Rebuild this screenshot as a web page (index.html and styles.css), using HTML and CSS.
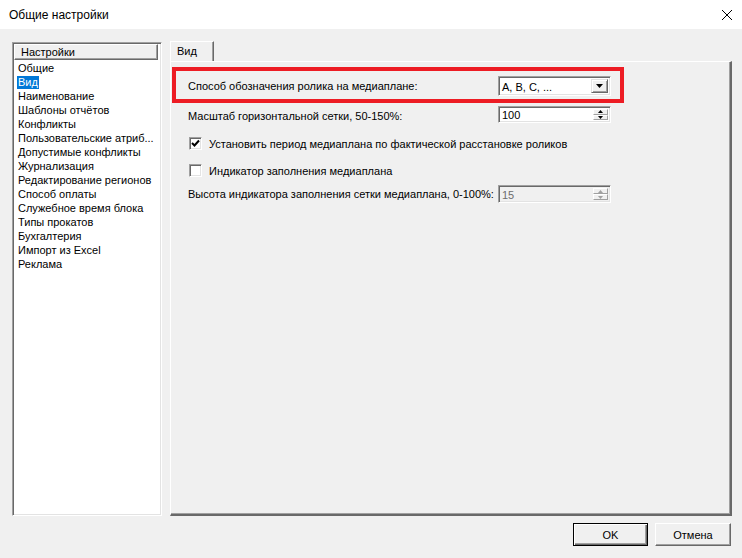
FILE: index.html
```html
<!DOCTYPE html>
<html lang="ru">
<head>
<meta charset="utf-8">
<title>Общие настройки</title>
<link rel="stylesheet" href="styles.css">
</head>
<body>
<div class="window">
  <div class="titlebar">
    <span class="title">Общие настройки</span>
    <svg class="close" width="12" height="12" viewBox="0 0 12 12"><path d="M1 1 L11 11 M11 1 L1 11" stroke="#000" stroke-width="1" fill="none"/></svg>
  </div>
  <div class="main">
    <div class="listbox">
      <div class="lb-header">Настройки</div>
      <ul class="lb-items">
        <li>Общие</li>
        <li><span class="sel">Вид</span></li>
        <li>Наименование</li>
        <li>Шаблоны отчётов</li>
        <li>Конфликты</li>
        <li>Пользовательские атриб...</li>
        <li>Допустимые конфликты</li>
        <li>Журнализация</li>
        <li>Редактирование регионов</li>
        <li>Способ оплаты</li>
        <li>Служебное время блока</li>
        <li>Типы прокатов</li>
        <li>Бухгалтерия</li>
        <li>Импорт из Excel</li>
        <li>Реклама</li>
      </ul>
    </div>
    <div class="tabs">
      <div class="tabstrip"><div class="tab">Вид</div></div>
      <div class="panel">
        <div class="redbox">
          <span class="label">Способ обозначения ролика на медиаплане:</span>
          <div class="combo">
            <span class="combo-text">A, B, C, ...</span>
            <span class="combo-btn"><svg width="7" height="4" viewBox="0 0 7 4"><path d="M0 0 H7 L3.5 4 Z" fill="#000"/></svg></span>
          </div>
        </div>
        <div class="row row2">
          <span class="label">Масштаб горизонтальной сетки, 50-150%:</span>
          <div class="spin">
            <span class="spin-text">100</span>
            <span class="spin-btns">
              <span class="sb"><svg width="5" height="3" viewBox="0 0 5 3"><path d="M2.5 0 L5 3 H0 Z" fill="#000"/></svg></span>
              <span class="sb"><svg width="5" height="3" viewBox="0 0 5 3"><path d="M0 0 H5 L2.5 3 Z" fill="#000"/></svg></span>
            </span>
          </div>
        </div>
        <div class="check check1">
          <span class="box"><svg width="9" height="9" viewBox="0 0 9 9"><path d="M1 4 L3.5 6.5 L8 1.5" stroke="#000" stroke-width="2" fill="none"/></svg></span>
          <span class="check-text">Установить период медиаплана по фактической расстановке роликов</span>
        </div>
        <div class="check check2">
          <span class="box"></span>
          <span class="check-text">Индикатор заполнения медиаплана</span>
        </div>
        <div class="row row5">
          <span class="label">Высота индикатора заполнения сетки медиаплана, 0-100%:</span>
          <div class="spin disabled">
            <span class="spin-text">15</span>
            <span class="spin-btns">
              <span class="sb"><svg width="5" height="3" viewBox="0 0 5 3"><path d="M2.5 0 L5 3 H0 Z" fill="#a0a0a0"/></svg></span>
              <span class="sb"><svg width="5" height="3" viewBox="0 0 5 3"><path d="M0 0 H5 L2.5 3 Z" fill="#a0a0a0"/></svg></span>
            </span>
          </div>
        </div>
      </div>
    </div>
  </div>
  <div class="footer">
    <button class="btn default">OK</button>
    <button class="btn">Отмена</button>
  </div>
</div>
</body>
</html>
```
FILE: styles.css
```css
* { box-sizing: border-box; }
html, body { margin: 0; padding: 0; }
body {
  width: 742px;
  height: 558px;
  background: #f0f0f0;
  font-family: "Liberation Sans", Arial, sans-serif;
  font-size: 11px;
  color: #000;
  overflow: hidden;
}
.window { display: flex; flex-direction: column; height: 558px; }
.titlebar {
  height: 29px;
  background: #fff;
  display: flex;
  align-items: center;
  justify-content: space-between;
  padding: 0 9px 0 9px;
}
.title { font-size: 12px; }
.main {
  display: flex;
  gap: 8px;
  padding: 12px 10px 0 12px;
  height: 487px;
}
.listbox {
  width: 150px;
  margin-top: 1px;
  height: 474px;
  background: #fff;
  border: 1px solid;
  border-color: #a0a0a0 #fff #fff #a0a0a0;
  box-shadow: inset 1px 1px 0 #696969, inset -1px -1px 0 #e3e3e3;
  padding: 1px 3px 1px 1px;
}
.lb-header {
  height: 16px;
  line-height: 15px;
  padding-left: 6px;
  background: #f0f0f0;
  border: 1px solid;
  border-color: #fff #696969 #696969 #fff;
  box-shadow: inset -1px -1px 0 #a0a0a0;
}
.lb-items {
  list-style: none;
  margin: 0;
  padding: 1px 0 0 4px;
}
.lb-items li { height: 14px; line-height: 14px; white-space: nowrap; }
.sel { background: #0078d7; color: #fff; padding: 0 1px; display: inline-block; height: 13px; line-height: 13px; margin-left: -1px; }
.tabs { flex: 1; display: flex; flex-direction: column; height: 475px; }
.tabstrip { height: 20px; display: flex; }
.tab {
  width: 44px;
  height: 20px;
  border: 1px solid;
  border-bottom: none;
  border-color: #fff #696969 #fff #fff;
  box-shadow: inset -1px 0 0 #a0a0a0;
  padding: 3px 0 0 6px;
  background: #f0f0f0;
}
.panel {
  flex: 1;
  border-top: 1px solid #fff;
  border-left: 1px solid #fff;
  border-right: 2px solid #696969;
  border-bottom: 2px solid #696969;
  box-shadow: inset -1px -1px 0 #a0a0a0;
  display: flex;
  flex-direction: column;
}
.redbox {
  margin: 5px 0 0 1px;
  width: 452px;
  height: 36px;
  border: 4px solid #ed1c24;
  display: flex;
  align-items: center;
  padding: 1px 0 0 12px;
}
.label { width: 310px; white-space: nowrap; flex: none; }
.combo, .spin {
  width: 113px;
  background: #fff;
  border: 1px solid;
  border-color: #a0a0a0 #fff #fff #a0a0a0;
  box-shadow: inset 1px 1px 0 #696969, inset -1px -1px 0 #e3e3e3;
  display: flex;
  align-items: stretch;
  padding: 2px;
}
.combo { height: 20px; }
.combo-text { flex: 1; line-height: 16px; padding-left: 1px; }
.combo-btn {
  width: 17px;
  background: #f0f0f0;
  border: 1px solid;
  border-color: #e3e3e3 #696969 #696969 #e3e3e3;
  box-shadow: inset 1px 1px 0 #fff, inset -1px -1px 0 #a0a0a0;
  display: flex;
  align-items: center;
  justify-content: center;
}
.row { display: flex; align-items: center; padding-left: 17px; }
.row2 { margin-top: 3px; }
.row2 .label { padding-top: 2px; }
.spin { height: 17px; }
.spin-text { flex: 1; line-height: 13px; padding-left: 1px; }
.spin-btns { width: 15px; display: flex; flex-direction: column; }
.sb {
  flex: 1;
  background: #f0f0f0;
  border: 1px solid;
  border-color: #fff #a0a0a0 #a0a0a0 #fff;
  display: flex;
  align-items: center;
  justify-content: center;
}
.row5 { margin-top: 8px; }
.row5 .spin { height: 18px; }
.spin.disabled { background: #f0f0f0; color: #6d6d6d; }
.spin.disabled .spin-text { line-height: 14px; }
.check { display: flex; align-items: center; padding-left: 18px; height: 13px; }
.check1 { margin-top: 14px; }
.check2 { margin-top: 14px; }
.box {
  width: 13px;
  height: 13px;
  background: #fff;
  border: 1px solid;
  border-color: #a0a0a0 #fff #fff #a0a0a0;
  box-shadow: inset 1px 1px 0 #696969, inset -1px -1px 0 #e3e3e3;
  display: flex;
  align-items: center;
  justify-content: center;
  flex: none;
}
.check-text { margin-left: 7px; white-space: nowrap; }
.footer {
  display: flex;
  justify-content: flex-end;
  gap: 7px;
  padding: 7px 11px 0 0;
}
.btn {
  font-family: "Liberation Sans", Arial, sans-serif;
  font-size: 11px;
  height: 23px;
  width: 76px;
  background: #f0f0f0;
  color: #000;
  border: 1px solid;
  border-color: #fff #696969 #696969 #fff;
  box-shadow: inset -1px -1px 0 #a0a0a0;
  padding: 0;
}
.btn.default {
  width: 75px;
  border: 1px solid #000;
  box-shadow: inset 1px 1px 0 #fff, inset -1px -1px 0 #696969, inset -2px -2px 0 #a0a0a0;
}
```
